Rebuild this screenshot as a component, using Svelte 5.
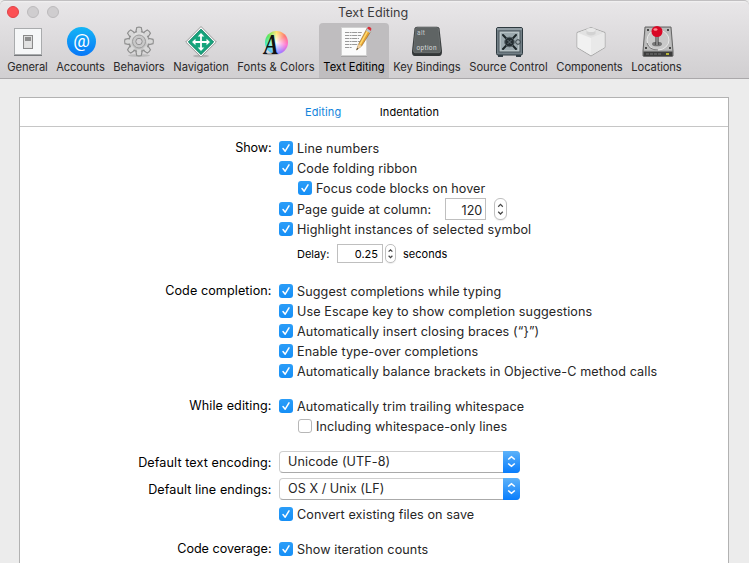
<script>
  const tools = [
    { id: 'general', label: 'General', cell: 49, text: 40 },
    { id: 'accounts', label: 'Accounts', cell: 57, text: 48 },
    { id: 'behaviors', label: 'Behaviors', cell: 60, text: 51 },
    { id: 'navigation', label: 'Navigation', cell: 64, text: 55 },
    { id: 'fonts', label: 'Fonts & Colors', cell: 86, text: 77 },
    { id: 'text', label: 'Text Editing', cell: 70, text: 61 },
    { id: 'keys', label: 'Key Bindings', cell: 76, text: 67 },
    { id: 'source', label: 'Source Control', cell: 87, text: 78 },
    { id: 'components', label: 'Components', cell: 75, text: 66 },
    { id: 'locations', label: 'Locations', cell: 59, text: 50 }
  ];
  const selected = 'text';

  const groups = [
    {
      label: 'Show:', width: 36, first: true,
      rows: [
        { text: 'Line numbers', width: 82, on: true },
        { text: 'Code folding ribbon', width: 120, on: true },
        { text: 'Focus code blocks on hover', width: 169, on: true, indent: true },
        { text: 'Page guide at column:', width: 134, on: true, field: '120' },
        { text: 'Highlight instances of selected symbol', width: 234, on: true },
        { delay: '0.25' }
      ]
    },
    {
      label: 'Code completion:', width: 106,
      rows: [
        { text: 'Suggest completions while typing', width: 204, on: true },
        { text: 'Use Escape key to show completion suggestions', width: 295, on: true },
        { text: 'Automatically insert closing braces (“}”)', width: 242, on: true },
        { text: 'Enable type-over completions', width: 181, on: true },
        { text: 'Automatically balance brackets in Objective-C method calls', width: 360, on: true }
      ]
    },
    {
      label: 'While editing:', width: 82,
      rows: [
        { text: 'Automatically trim trailing whitespace', width: 227, on: true },
        { text: 'Including whitespace-only lines', width: 191, on: false, indent: true }
      ]
    },
    { label: 'Default text encoding:', width: 133, menu: true, rows: [{ select: 'Unicode (UTF-8)', width: 102 }] },
    {
      label: 'Default line endings:', width: 123, menu: true,
      rows: [
        { select: 'OS X / Unix (LF)', width: 96 },
        { text: 'Convert existing files on save', width: 177, on: true }
      ]
    },
    { label: 'Code coverage:', width: 94, rows: [{ text: 'Show iteration counts', width: 131, on: true }] }
  ];

  const teeth = [0, 45, 90, 135, 180, 225, 270, 315];

  // Tracks a label so that it fills its measured width.
  function track(node, width) {
    const natural = node.getBoundingClientRect().width;
    node.style.letterSpacing = (width + 0.3 - natural) / node.textContent.length + 'px';
  }
</script>

{#snippet stepper(small)}
  <span class="stepper" class:small>
    <svg viewBox="0 0 12 20"><path d="M3.5 7.5 6 5l2.5 2.500M3.5 13 6 15.500l2.500-2.500" /></svg>
  </span>
{/snippet}

{#snippet icon(id)}
  <svg class="icon" viewBox="0 0 34 34">
    {#if id === 'general'}
      <rect x="3.500" y="4.500" width="27" height="26" fill="#f6f7f8" stroke="#a9abad" />
      <path d="M3 31.500h28" stroke="#77797c" />
      <rect x="12.500" y="11.500" width="9" height="13" fill="#ddd" stroke="#8a8a8a" />
      <rect x="14" y="13" width="6" height="5" fill="#8d8d8d" />
      <rect x="14" y="17" width="6" height="6" fill="#e2e2e2" />
    {:else if id === 'accounts'}
      <defs><linearGradient id="acc" x2="0" y2="1"><stop stop-color="#13b5f5" /><stop offset="1" stop-color="#0877f8" /></linearGradient></defs>
      <circle cx="17.500" cy="17.500" r="14.500" fill="url(#acc)" />
      <text x="17.500" y="23" text-anchor="middle" font-size="18.500" fill="#fff">@</text>
    {:else if id === 'behaviors'}
      <defs><linearGradient id="gear" x2="0" y2="1"><stop stop-color="#e6e6e6" /><stop offset="1" stop-color="#bcbcbc" /></linearGradient></defs>
      <ellipse cx="17" cy="31.500" rx="11" ry="1.500" fill="#aaa" opacity=".6" />
      <g stroke="#8f8f8f" stroke-width="1.200">
        {#each teeth as a}
          <path d="M13.800 8 14.800 3.500q2.200-.8 4.400 0L20.200 8z" fill="#ddd" transform="rotate({a} 17 17.500)" />
        {/each}
        <circle cx="17" cy="17.500" r="10" fill="url(#gear)" />
      </g>
      {#each teeth as a}
        <path d="M14.700 9.500 15.500 4.500h3l.8 5z" fill="#d8d8d8" transform="rotate({a} 17 17.500)" />
      {/each}
      <circle cx="17" cy="17.500" r="6.500" fill="#c8c8c8" stroke="#9b9b9b" />
      <circle cx="17" cy="17.500" r="3.200" fill="#d4d2d4" stroke="#929292" />
    {:else if id === 'navigation'}
      <ellipse cx="17" cy="32" rx="8" ry="1.300" fill="#999" opacity=".6" />
      <path d="M17 2.500 32.300 18 17 33 1.700 18z" fill="#fafafa" stroke="#999" stroke-linejoin="round" />
      <path d="M17 5.200 29.600 18 17 30.500 4.400 18z" fill="#16a47c" stroke="#087e61" />
      <path d="M17 11v14M10 18h14" stroke="#fff" stroke-width="1.800" />
      <path d="m17 9 3.300 3.500h-6.600zM17 27l-3.300-3.500h6.600zM8 18l3.500-3.300v6.600zM26 18l-3.500-3.300v6.600z" fill="#fff" />
    {:else if id === 'fonts'}
      <foreignObject x="6" y="7" width="23" height="23"><div class="wheel"></div></foreignObject>
      <ellipse cx="12" cy="30" rx="8" ry="1.200" fill="#555" opacity=".35" />
      <text class="serif" x="5" y="30" font-size="29" textLength="14.500" lengthAdjust="spacingAndGlyphs">A</text>
    {:else if id === 'text'}
      <path d="M4 32.500h26" stroke="#999" opacity=".7" />
      <path d="M4.500 3.500h25v28h-25z" fill="#fbfbfb" stroke="#d1d1d1" />
      <path d="M8 8.500h17M8 11.500h16M8 14.500h14M8 17.500h15M8 20.500h13M8 23.500h7" stroke="#999" stroke-dasharray="4 .6 2 .5 5 .7" />
      <path d="m19.500 26 2.200-6 8-15 4 2.500-9 14.500z" fill="#e8a331" stroke="#8a642e" stroke-width=".6" />
      <path d="m22.500 20 8-14.500 1.300.8-8 14.500z" fill="#ffdb70" />
      <path d="m19.500 26 2.200-6 3 2z" fill="#edcfa2" />
      <path d="m19.500 26 .7-2 1 .7z" fill="#222" />
      <path d="m29 6.500 1.200-2 4 2.500-1.300 2z" fill="#bbc3cc" />
      <path d="m30.200 4.500.7-1.500q2-1 3.500 1.500L34 7z" fill="#d92e38" />
    {:else if id === 'keys'}
      <path d="M4.500 4.500q.5-1.700 2.500-1.700h20q2 0 2.500 1.700L32 27q.3 5-3 5H4.800q-3.200 0-2.800-5z" fill="#343839" />
      <path d="M5.500 5q.3-1.500 1.800-1.500h19.400Q28.200 3.500 28.500 5l2 22q0 1.700-1.700 1.700H5.200Q3.500 28.700 3.500 27z" fill="#5f6464" stroke="#7b8080" stroke-width=".6" />
      <text x="7" y="11" font-size="6.500" fill="#c4c8c8" textLength="8">alt</text>
      <text x="6.500" y="25.500" font-size="6.500" fill="#d8dbdb" textLength="20">option</text>
    {:else if id === 'source'}
      <path d="M6 30h5v3H6zM24 30h5v3h-5z" fill="#354047" />
      <rect x="4.500" y="3.500" width="26" height="27.500" rx="1.500" fill="#727f86" stroke="#2e3a40" />
      <path d="M5 5h25" stroke="#aebbc0" />
      <rect x="7" y="7" width="21" height="21" fill="#b8c3c6" stroke="#4b575d" />
      <rect x="9" y="9" width="17" height="17" fill="#9ca9ae" />
      <path d="m11 11 13 14M24 11l-13 14" stroke="#1d2629" stroke-width="2" stroke-linecap="round" />
      <circle cx="17.500" cy="18" r="4.800" fill="#252e32" stroke="#596469" />
      <path d="m15.500 16 4 4M19.500 16l-4 4" stroke="#68757b" />
      <circle cx="26" cy="18" r="2.300" fill="#a6b1b5" stroke="#354045" />
    {:else if id === 'components'}
      <path d="m18 3.500 14 5v15L18 32 4 23.500v-15z" fill="#eee" stroke="#aaa" stroke-linejoin="round" />
      <path d="M4.500 9 18 14V31L4.500 23.300z" fill="#f1f1f1" />
      <path d="M31.500 9 18 14V31l13.500-7.700z" fill="#e9e9e9" />
      <path d="m18 4 13 4.800-13 5.200L5 8.800z" fill="#e2e2e2" />
      <path d="M13.500 6v4q4.500 3 9 0V6z" fill="#d2d2d2" />
      <ellipse cx="18" cy="6" rx="4.500" ry="2" fill="#e8e8e8" />
    {:else}
      <path d="M5 3h26l2 24v5H3v-5z" fill="#aaa" stroke="#666" />
      <path d="M6 4h24l2 22H4z" fill="#bcbcbc" />
      <ellipse cx="18" cy="16" rx="11" ry="10" fill="#c9c9c9" stroke="#e8e8e8" />
      <path d="M7 19q2 7 11 7" fill="none" stroke="#777" />
      <path d="M3.500 27.500h29v5h-29z" fill="#3d3d3d" />
      <path d="M6 30h15" stroke="#777" stroke-dasharray="3 1" />
      <path d="M26 30h3" stroke="#e2dd35" stroke-width="1.500" />
      <ellipse cx="17" cy="20" rx="5" ry="2.300" fill="#777" />
      <path d="M17 10v11" stroke="#333" stroke-width="3" /><path d="M17 10v11" stroke="#ddd" />
      <g fill="#222"><circle cx="8" cy="6" r="1" /><circle cx="28" cy="6" r="1" /><circle cx="6" cy="24" r="1" /><circle cx="30" cy="24" r="1" /></g>
      <circle cx="17" cy="7.500" r="5.500" fill="#d90725" /><ellipse cx="15.500" cy="5.500" rx="2" ry="1.300" fill="#ff8a91" />
    {/if}
  </svg>
{/snippet}

<div class="window">
  <header>
    <div class="titlebar">
      <div class="lights"><i class="close"></i><i></i><i></i></div>
      <span class="title"><span use:track={70}>Text Editing</span></span>
    </div>
    <nav>
      {#each tools as tool}
        <div class="tool" class:selected={tool.id === selected} style:width="{tool.cell}px">
          {@render icon(tool.id)}
          <span use:track={tool.text}>{tool.label}</span>
        </div>
      {/each}
    </nav>
  </header>

  <main>
    <div class="tabs">
      <span class="active" use:track={36}>Editing</span>
      <span use:track={59}>Indentation</span>
    </div>
    <div class="form">
      {#each groups as group}
        <section class:first={group.first} class:menus={group.menu}>
          <div class="label"><span use:track={group.width}>{group.label}</span></div>
          <div class="rows">
            {#each group.rows as row}
              {#if row.delay}
                <div class="row delay">
                  <span class="lead"><span use:track={32}>Delay:</span></span>
                  <span class="field">{row.delay}</span>
                  {@render stepper(true)}
                  <span class="unit" use:track={44}>seconds</span>
                </div>
              {:else if row.select}
                <div class="popup">
                  <span use:track={row.width}>{row.select}</span>
                  <b><svg viewBox="0 0 17 21"><path d="m5.200 8.500 3.300-2.800 3.300 2.800M5.200 12.500l3.300 2.800 3.300-2.800" /></svg></b>
                </div>
              {:else}
                <div class="row" class:indent={row.indent} class:tall={row.field}>
                  <span class="box" class:on={row.on}>
                    {#if row.on}<svg viewBox="0 0 14 14"><path d="m4 7.500 2.200 2.700L10 3.800" /></svg>{/if}
                  </span>
                  <span class="text" use:track={row.width}>{row.text}</span>
                  {#if row.field}
                    <span class="field">{row.field}</span>
                    {@render stepper(false)}
                  {/if}
                </div>
              {/if}
            {/each}
          </div>
        </section>
      {/each}
    </div>
  </main>
</div>

<style>
  :global(body) { background: #ececec; }
  .window {
    width: 749px;
    height: 563px;
    overflow: hidden;
    display: flex;
    flex-direction: column;
    box-sizing: border-box;
    font: 12.6px/20px Inter, "Liberation Sans", sans-serif;
    color: #262626;
    white-space: nowrap;
    background: #ececec;
  }
  header {
    flex: none;
    height: 79px;
    box-sizing: border-box;
    border-top: 1px solid #c1bfc1;
    border-bottom: 1px solid #aaa8aa;
    border-radius: 5px 5px 0 0;
    background: linear-gradient(#f3f2f3 0, #e8e6e8 2px, #d1cfd1);
  }
  .titlebar { display: flex; height: 22px; align-items: center; }
  .lights { display: flex; gap: 8px; padding-left: 7px; width: 331px; }
  .lights i { width: 12px; height: 12px; box-sizing: border-box; border: 1px solid #bcbabc; border-radius: 50%; background: #cfcdcf; }
  .lights .close { background: #fc5054; border-color: #df4248; }
  .title { color: #3c3b3c; padding-top: 2px; }
  nav { display: flex; padding-left: 3px; height: 55px; }
  .tool { display: flex; flex-direction: column; align-items: center; font-size: 11.2px; line-height: 17px; color: #2b2a2b; }
  .selected { background: #bfbdbf; border-radius: 4px 4px 0 0; color: #000; }
  .icon { width: 34px; height: 34px; margin: 1px 0; flex: none; overflow: visible; }
  .icon text { font-family: Roboto, sans-serif; }
  .icon .serif { font-family: "Liberation Serif", serif; font-style: italic; font-weight: bold; fill: #111; }
  .wheel { width: 23px; height: 23px; border-radius: 50%; background: radial-gradient(#fffd 5%, #fff0 65%), conic-gradient(#ffe36d, #ff7770, #ff72d1, #a678ff, #61bdff, #41eac5, #5be65a, #ffe36d); }
  main {
    flex: 1;
    margin: 18px 20px 0 19px;
    border: 1px solid #b2b2b2;
    border-bottom: 0;
    background: #fff;
  }
  .tabs { display: flex; gap: 38.5px; height: 28px; padding-left: 285px; border-bottom: 1px solid #c6c6c6; font-size: 11px; line-height: 29px; color: #000; }
  .tabs .active { color: #1385dc; }
  .form { padding-top: 11px; display: flex; flex-direction: column; }
  section { display: flex; gap: 7px; margin-bottom: 15px; }
  .label { width: 251.5px; margin-right: .5px; display: flex; justify-content: flex-end; color: #000; }
  .first { margin-bottom: 13px; }
  .menus { margin-bottom: 5px; }
  .menus .label { margin-top: 2px; }
  .menus + .menus { margin-bottom: 15px; }
  .row { display: flex; align-items: center; height: 20px; }
  .text { padding-top: 2px; }
  .tall { height: 21px; }
  .indent { padding-left: 19px; }
  .box { width: 14px; height: 14px; box-sizing: border-box; border: 1px solid #b7b7b7; border-radius: 3px; margin-right: 4px; background: #fff; }
  .on { border: 0; background: linear-gradient(#2b9df8, #168ff6); }
  .box svg { display: block; }
  .box path { fill: none; stroke: #fff; stroke-width: 1.500; stroke-linecap: round; stroke-linejoin: round; }
  .field { box-sizing: border-box; border: 1px solid #bfbfbf; text-align: right; background: #fff; flex: none; }
  .tall .field { width: 41px; height: 22px; margin-left: 14px; padding-right: 3px; line-height: 23px; }
  .stepper { width: 13px; height: 22px; box-sizing: border-box; border: 1px solid #c0c0c0; border-radius: 6px; margin-left: 8px; display: flex; background: #fff; box-shadow: 0 1px 1px #0001; flex: none; }
  .stepper svg { width: 100%; height: 100%; }
  .stepper path { fill: none; stroke: #444; stroke-width: 1.300; }
  .delay { height: 29px; padding-left: 18px; font-size: 11px; color: #000; }
  .delay .lead { width: 40px; }
  .delay .field { width: 46px; height: 19px; line-height: 18px; padding-right: 4px; }
  .small { width: 11px; height: 19px; border-radius: 5px; margin-left: 2px; }
  .small path { stroke-width: 1.600; }
  .unit { margin-left: 7px; }
  .popup { display: flex; justify-content: space-between; width: 241px; height: 22px; box-sizing: border-box; border: 1px solid #cfcfcf; border-bottom-color: #aaa; border-radius: 4px; padding-left: 8px; line-height: 19px; }
  .popup b { width: 17px; height: 22px; margin: -1px; background: linear-gradient(#5db2f9, #087dfc); border-radius: 0 4px 4px 0; }
  .popup svg { display: block; }
  .popup path { fill: none; stroke: #fff; stroke-width: 1.600; }
  .popup + .row { margin-top: 4px; }
</style>
